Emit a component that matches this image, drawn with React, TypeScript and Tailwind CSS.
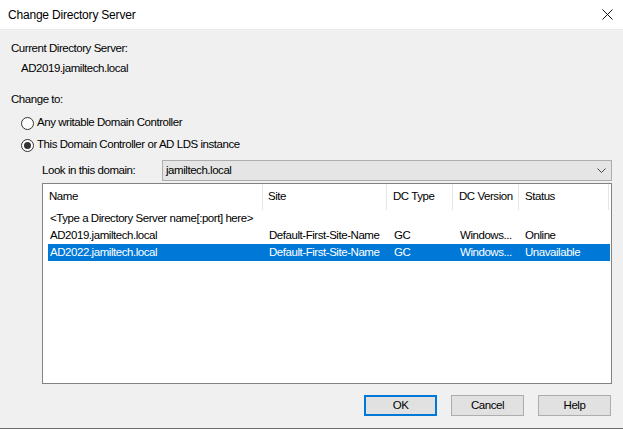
import React from "react";

const font = { fontFamily: '"Liberation Sans", Arial, sans-serif' };

function Radio({ checked, label }: { checked: boolean; label: string }) {
  return (
    <div className="flex items-center h-[16px]">
      <div className="w-[13px] h-[13px] rounded-full border border-[#333333] bg-white flex items-center justify-center">
        {checked && <div className="w-[7px] h-[7px] rounded-full bg-[#333333]" />}
      </div>
      <span className="ml-[3px]">{label}</span>
    </div>
  );
}

const rows = [
  { name: "<Type a Directory Server name[:port] here>", site: "", type: "", ver: "", status: "", sel: false },
  { name: "AD2019.jamiltech.local", site: "Default-First-Site-Name", type: "GC", ver: "Windows...", status: "Online", sel: false },
  { name: "AD2022.jamiltech.local", site: "Default-First-Site-Name", type: "GC", ver: "Windows...", status: "Unavailable", sel: true },
];

export default function App() {
  return (
    <div
      className="w-[623px] h-[429px] bg-[#f0f0f0] flex flex-col text-[11.5px] tracking-[-0.45px] text-black overflow-hidden"
      style={font}
    >
      <div className="h-[30px] bg-white flex items-center justify-between pl-[8px] pr-[10px] shrink-0 border-b border-[#e9e9e9]">
        <span className="text-[12px] tracking-[-0.2px] text-black">Change Directory Server</span>
        <svg width="11" height="11" viewBox="0 0 11 11">
          <path d="M0.5 0.5L10.5 10.5M10.5 0.5L0.5 10.5" stroke="#111" strokeWidth="1" />
        </svg>
      </div>
      <div className="flex-1 flex flex-col pl-[11px] pr-[11px]">
        <div className="mt-[10px] h-[16px] leading-[16px]">Current Directory Server:</div>
        <div className="mt-[4px] h-[16px] leading-[16px] pl-[10px]">AD2019.jamiltech.local</div>
        <div className="mt-[15px] h-[16px] leading-[16px]">Change to:</div>
        <div className="mt-[8px] pl-[10px]">
          <Radio checked={false} label="Any writable Domain Controller" />
        </div>
        <div className="mt-[6px] pl-[10px]">
          <Radio checked={true} label="This Domain Controller or AD LDS instance" />
        </div>
        <div className="mt-[7px] ml-[31px] flex items-center h-[21px]">
          <span className="w-[120px] shrink-0">Look in this domain:</span>
          <div className="flex-1 h-[21px] bg-[#e5e5e5] border border-[#adadad] flex items-center justify-between pl-[3px] pr-[5px]">
            <span>jamiltech.local</span>
            <svg width="9" height="5" viewBox="0 0 9 5">
              <path d="M0.5 0.5L4.5 4.5L8.5 0.5" stroke="#444" fill="none" strokeWidth="1" />
            </svg>
          </div>
        </div>
        <div className="mt-[2px] ml-[31px] h-[201px] bg-white border border-[#828282] flex flex-col">
          <div className="h-[26px] flex items-stretch shrink-0">
            <div className="w-[220px] pl-[6px] flex items-center border-r border-[#e5e5e5]">Name</div>
            <div className="w-[124px] pl-[5px] flex items-center border-r border-[#e5e5e5]">Site</div>
            <div className="w-[66px] pl-[6px] flex items-center border-r border-[#e5e5e5]">DC Type</div>
            <div className="w-[66px] pl-[6px] flex items-center border-r border-[#e5e5e5]">DC Version</div>
            <div className="w-[90px] pl-[6px] flex items-center border-r border-[#e5e5e5]">Status</div>
          </div>
          <div className="flex flex-col pl-[5px]">
            {rows.map((r, i) => (
              <div
                key={i}
                className={`h-[17px] w-[562px] flex items-center ${r.sel ? "bg-[#0078d7] text-white" : ""}`}
              >
                <div className="w-[215px] pl-[2px] whitespace-nowrap">{r.name}</div>
                <div className="w-[124px] pl-[6px] whitespace-nowrap">{r.site}</div>
                <div className="w-[66px] pl-[7px] whitespace-nowrap">{r.type}</div>
                <div className="w-[66px] pl-[7px] whitespace-nowrap">{r.ver}</div>
                <div className="w-[90px] pl-[6px] whitespace-nowrap">{r.status}</div>
              </div>
            ))}
          </div>
        </div>
        <div className="mt-[11px] flex justify-end gap-[14px] pr-[1px]">
          <button className="w-[73px] h-[21px] bg-[#e1e1e1] border-2 border-[#0078d7] flex items-center justify-center">
            OK
          </button>
          <button className="w-[73px] h-[21px] bg-[#e1e1e1] border border-[#adadad] flex items-center justify-center">
            Cancel
          </button>
          <button className="w-[73px] h-[21px] bg-[#e1e1e1] border border-[#adadad] flex items-center justify-center">
            Help
          </button>
        </div>
      </div>
      <div className="h-[1px] bg-[#6d6d6d] shrink-0" />
    </div>
  );
}
